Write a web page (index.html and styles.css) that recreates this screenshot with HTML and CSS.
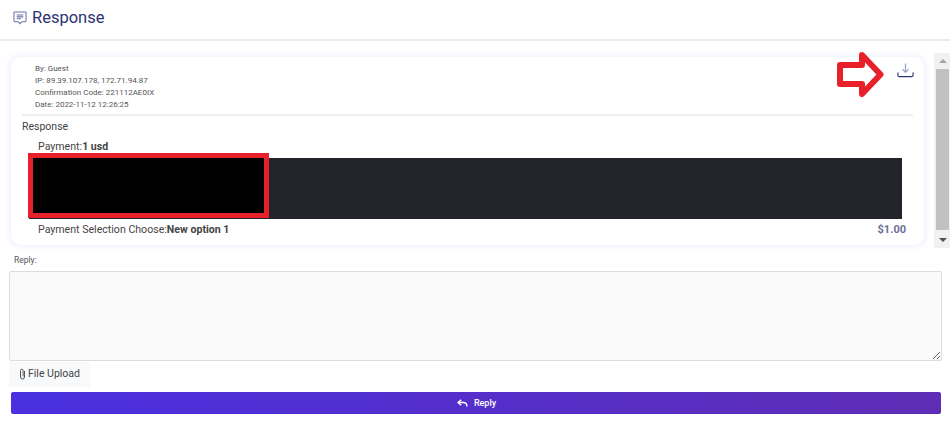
FILE: index.html
```html
<!DOCTYPE html>
<html lang="en">
<head>
  <meta charset="UTF-8" />
  <title>Response</title>
  <link rel="stylesheet" href="styles.css">
</head>
<body>
  <header class="top">
    <svg class="top-icon" width="14" height="14" viewBox="0 0 14 15" fill="none" stroke="#6a70a8" stroke-width="1.1">
      <path d="M1.500 1h11a1 1 0 0 1 1 1v8.500a1 1 0 0 1-1 1H9L7 13.600 5 11.500H1.500a1 1 0 0 1-1-1V2a1 1 0 0 1 1-1z"/>
      <path d="M3.500 4.200h7M3.500 6.300h7M3.500 8.400h4.500"/>
    </svg>
    <h1>Response</h1>
  </header>

  <section class="scroll-wrap">
    <div class="card">
      <div class="meta">
        <p>By: Guest</p>
        <p>IP: 89.39.107.178, 172.71.94.87</p>
        <p>Confirmation Code: 221112AE0IX</p>
        <p>Date: 2022-11-12 12:26:25</p>
      </div>
      <button class="download" aria-label="Download">
        <svg width="17" height="15" viewBox="0 0 18 15" fill="none">
          <path d="M9 0v9M5.800 6 9 9.500 12.200 6" stroke="#9a9fc8" stroke-width="1.300"/>
          <path d="M1 9.500v3a1.500 1.500 0 0 0 1.500 1.500h13a1.500 1.500 0 0 0 1.500-1.500v-3" stroke="#2c3272" stroke-width="1.200"/>
        </svg>
      </button>
      <h2>Response</h2>
      <div class="answers">
        <p>Payment:<b>1 usd</b></p>
        <div class="code-block"></div>
        <div class="answer-row">
          <p>Payment Selection Choose:<b>New option 1</b></p>
          <span class="price">$1.00</span>
        </div>
      </div>
    </div>
    <div class="scrollbar">
      <span class="arrow-up"></span>
      <span class="thumb"></span>
      <span class="arrow-down"></span>
    </div>

    <!-- annotations drawn on top of the screenshot -->
    <div class="mark-box"></div>
    <svg class="mark-arrow" width="50" height="50" viewBox="0 0 50 50" fill="#fff" stroke="#e8202a" stroke-width="6" stroke-linejoin="round">
      <path d="M4 15H26V5L44.500 24.500 26 44V34H4z"/>
    </svg>
  </section>

  <form class="reply-form">
    <label for="reply">Reply:</label>
    <textarea id="reply"></textarea>
    <div class="upload">
      <svg width="7" height="12" viewBox="0 0 7 12" fill="none" stroke="#555" stroke-width="1">
        <path d="M5.500 3v6a2 2 0 0 1-4 0V2.500a1.300 1.300 0 0 1 2.600 0V8.500"/>
      </svg>
      File Upload
    </div>
    <button type="button" class="reply-btn">
      <svg width="11" height="8" viewBox="0 0 12 9" fill="none" stroke="#fff" stroke-width="1.600">
        <path d="M4.500 1 1 4l3.500 3M1.500 4H7c2.500 0 4 1.500 4 4.500"/>
      </svg>
      Reply
    </button>
  </form>
</body>
</html>
```

FILE: styles.css
```css
* {
  box-sizing: border-box;
}
body {
  margin: 0;
  height: 426px;
  overflow: hidden;
  font-family: Roboto, 'Liberation Sans', sans-serif;
  background-color: #fff;
  color: #333;
}
p {
  margin: 0;
}
.top {
  height: 41px;
  border-bottom: 2px solid #ececf0;
  padding: 0 0 4px 13px;
  display: flex;
  align-items: center;
  gap: 5px;
}
.top h1 {
  margin: 0;
  font-size: 16.500px;
  font-weight: 400;
  color: #2c3272;
}
.scroll-wrap {
  position: relative;
  display: flex;
  justify-content: space-between;
  height: 207px;
  padding: 16px 0 0 11px;
}
.card {
  position: relative;
  width: 913px;
  height: 188px;
  background-color: #fff;
  border-radius: 10px;
  box-shadow: 0 0 6px 2px #eef2fc;
  padding: 6px 11px 0;
}
.meta {
  padding-left: 13px;
  padding-bottom: 3px;
  border-bottom: 2px solid #eeeeee;
}
.meta p {
  font-size: 8px;
  line-height: 12px;
  color: #555;
}
.download {
  position: absolute;
  top: 6px;
  right: 10px;
  padding: 0;
  border: none;
  background: none;
}
.card h2 {
  margin: 4px 0 0;
  font-size: 10.500px;
  line-height: 13px;
  font-weight: 400;
  color: #444;
}
.answers {
  font-size: 10.600px;
  color: #444;
  padding-top: 8px;
}
.answers > p {
  padding-left: 16px;
  line-height: 12px;
}
.code-block {
  height: 61px;
  margin: 5px 0 0 7px;
  width: 873px;
  background-color: #212529;
}
.answer-row {
  display: flex;
  justify-content: space-between;
  padding: 4px 7px 0 16px;
  line-height: 13px;
}
.price {
  font-size: 11px;
  font-weight: 700;
  color: #6a6f97;
}
.scrollbar {
  width: 16px;
  margin-top: -4px;
  height: 195px;
  background-color: #f1f1f1;
  display: flex;
  flex-direction: column;
  align-items: center;
  padding: 0 1px 0 2px;
}
.arrow-up, .arrow-down {
  flex: none;
  width: 0;
  height: 0;
  border-left: 4px solid transparent;
  border-right: 4px solid transparent;
}
.arrow-up {
  margin: 6px 0;
  border-bottom: 4px solid #a3a3a3;
}
.arrow-down {
  margin: 8px 0 6px;
  border-top: 4px solid #505050;
}
.thumb {
  flex: 1;
  width: 100%;
  background-color: #c1c1c1;
}
.mark-box {
  position: absolute;
  left: 28px;
  top: 112px;
  width: 241px;
  height: 65px;
  background-color: #000;
  border: 5px solid #e8202a;
}
.mark-arrow {
  position: absolute;
  left: 836px;
  top: 9px;
}
.reply-form {
  padding: 7px 9px 0;
}
.reply-form label {
  display: block;
  font-size: 8.500px;
  line-height: 10px;
  color: #555;
  padding-left: 5px;
}
textarea {
  display: block;
  width: 933px;
  height: 90px;
  margin-top: 6px;
  background-color: #fafafa;
  border: 1px solid #dcdcdc;
  border-radius: 2px;
}
.upload {
  display: flex;
  align-items: center;
  gap: 2px;
  width: 81px;
  height: 25px;
  margin-top: 1px;
  padding: 0 0 2px 10px;
  background-color: #f8f9fa;
  font-size: 10.500px;
  color: #444;
}
.reply-btn {
  display: flex;
  align-items: center;
  justify-content: center;
  gap: 6px;
  width: 930px;
  height: 22px;
  margin: 5px 0 0 2px;
  padding: 0 0 0 1px;
  border: none;
  border-radius: 2px;
  background: linear-gradient(to right, #4a30e0, #5f2db5);
  color: #fff;
  font-family: inherit;
  font-size: 9px;
  font-weight: 500;
}
```
